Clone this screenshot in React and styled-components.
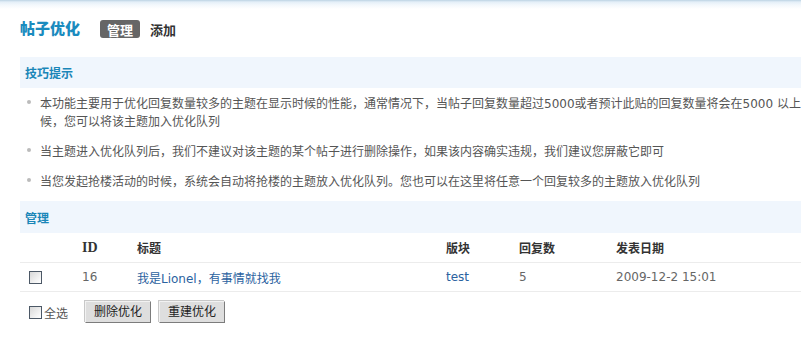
import React from "react";
import styled, { createGlobalStyle } from "styled-components";

const Global = createGlobalStyle`
  html, body { margin: 0; padding: 0; overflow: hidden; }
  body {
    background: linear-gradient(#bcd3e3 0, #e4eff8 2px, #f3f8fc 5px, #ffffff 9px) no-repeat;
    background-size: 100% 10px;
    background-color: #fff;
    font-family: "DejaVu Sans", "Noto Sans CJK SC", sans-serif;
    font-size: 12px;
    color: #555;
  }
`;

const Page = styled.div`
  width: 820px;
  margin-left: 20px;
  padding-top: 17px;
`;

const Header = styled.div`
  display: flex;
  align-items: center;
  height: 24px;
`;

const Title = styled.h1`
  margin: 0 20px 0 0;
  font-size: 15px;
  font-weight: 900;
  color: #1a8bbe;
  line-height: 24px;
`;

const Tab = styled.span`
  display: inline-flex;
  align-items: center;
  height: 18px;
  margin-right: 10px;
  border-radius: 3px;
  font-size: 13px;
  font-weight: bold;
  color: ${(p) => (p.$active ? "#fff" : "#333")};
  background: ${(p) => (p.$active ? "#666" : "transparent")};
  padding: ${(p) => (p.$active ? "0 7px" : "0")};
`;

const Bar = styled.div`
  display: flex;
  align-items: center;
  height: ${(p) => p.$h}px;
  margin-top: ${(p) => p.$mt}px;
  padding-left: 5px;
  background: #f0f6fd;
  color: #1a86b8;
  font-weight: bold;
  font-size: 12px;
`;

const Tips = styled.ul`
  list-style: none;
  margin: 7px 0 0 0;
  padding: 0 10px 0 0;
`;

const Tip = styled.li`
  display: flex;
  align-items: flex-start;
  padding-left: 7px;
  margin-bottom: 12px;
  line-height: 18px;
  &:last-child { margin-bottom: 0; }
`;

const Dot = styled.span`
  flex: none;
  width: 4px;
  height: 4px;
  margin: 5px 9px 0 0;
  border-radius: 50%;
  background: #bbb;
`;

const TipText = styled.span`
  flex: 1;
`;

const Table = styled.table`
  width: 100%;
  border-collapse: collapse;
  table-layout: fixed;
`;

const Th = styled.th`
  height: 29px;
  padding: 0;
  text-align: left;
  font-weight: bold;
  color: #333;
  border-bottom: 1px solid #ececec;
  font-family: ${(p) => (p.$serif ? '"Liberation Serif", serif' : "inherit")};
  font-size: ${(p) => (p.$serif ? "14px" : "12px")};
`;

const Td = styled.td`
  height: 28px;
  padding: 0;
  padding-left: ${(p) => p.$pl || 0}px;
  text-align: left;
  color: #666;
  border-bottom: 1px solid #ececec;
`;

const Link = styled.a`
  color: #2b62a0;
  text-decoration: none;
`;

const Check = styled.input.attrs({ type: "checkbox" })`
  appearance: none;
  -webkit-appearance: none;
  width: 13px;
  height: 13px;
  margin: 0;
  display: block;
  border: 1px solid #4c5866;
  background: linear-gradient(135deg, #d8d8d8 0%, #f4f4f4 70%, #ffffff 100%);
  box-sizing: border-box;
`;

const Footer = styled.div`
  display: flex;
  align-items: center;
  padding: 9px 0 0 9px;
`;

const CheckLabel = styled.label`
  display: flex;
  align-items: center;
  gap: 2px;
  color: #555;
  margin-right: 17px;
`;

const Button = styled.button`
  height: 22px;
  padding: 0 8px;
  margin-right: 8px;
  font-family: inherit;
  font-size: 12px;
  color: #222;
  background: #dedede;
  border: 1px solid;
  border-color: #f2f2f2 #7c7c7c #7c7c7c #f2f2f2;
  box-shadow: -1px -1px 0 #c8c8c8;
  border-radius: 0;
  line-height: 20px;
`;

export default function App() {
  return (
    <>
      <Global />
      <Page>
        <Header>
          <Title>帖子优化</Title>
          <Tab $active>管理</Tab>
          <Tab>添加</Tab>
        </Header>
        <Bar $h={31} $mt={16}>技巧提示</Bar>
        <Tips>
          <Tip>
            <Dot />
            <TipText>
              本功能主要用于优化回复数量较多的主题在显示时候的性能，通常情况下，当帖子回复数量超过5000或者预计此贴的回复数量将会在5000 以上的时候，您可以将该主题加入优化队列
            </TipText>
          </Tip>
          <Tip>
            <Dot />
            <TipText>
              当主题进入优化队列后，我们不建议对该主题的某个帖子进行删除操作，如果该内容确实违规，我们建议您屏蔽它即可
            </TipText>
          </Tip>
          <Tip>
            <Dot />
            <TipText>
              当您发起抢楼活动的时候，系统会自动将抢楼的主题放入优化队列。您也可以在这里将任意一个回复较多的主题放入优化队列
            </TipText>
          </Tip>
        </Tips>
        <Bar $h={32} $mt={10}>管理</Bar>
        <Table>
          <colgroup>
            <col style={{ width: 62 }} />
            <col style={{ width: 55 }} />
            <col style={{ width: 309 }} />
            <col style={{ width: 73 }} />
            <col style={{ width: 97 }} />
            <col />
          </colgroup>
          <thead>
            <tr>
              <Th></Th>
              <Th $serif>ID</Th>
              <Th>标题</Th>
              <Th>版块</Th>
              <Th>回复数</Th>
              <Th>发表日期</Th>
            </tr>
          </thead>
          <tbody>
            <tr>
              <Td $pl={9}><Check /></Td>
              <Td>16</Td>
              <Td><Link href="#">我是Lionel，有事情就找我</Link></Td>
              <Td><Link href="#">test</Link></Td>
              <Td>5</Td>
              <Td>2009-12-2 15:01</Td>
            </tr>
          </tbody>
        </Table>
        <Footer>
          <CheckLabel>
            <Check />
            全选
          </CheckLabel>
          <Button>删除优化</Button>
          <Button>重建优化</Button>
        </Footer>
      </Page>
    </>
  );
}
